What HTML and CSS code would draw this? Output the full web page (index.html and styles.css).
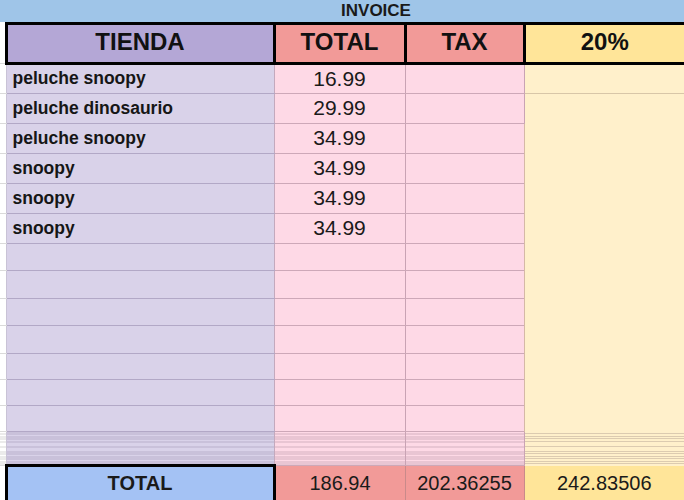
FILE: index.html
```html
<!DOCTYPE html>
<html>
<head>
<meta charset="utf-8">
<link rel="stylesheet" href="styles.css">
</head>
<body>
<div class="sheet">
  <div class="title">INVOICE</div>
  <table class="grid">
    <colgroup>
      <col class="c-gut"><col class="c-name"><col class="c-total"><col class="c-tax"><col class="c-pct">
    </colgroup>
    <tr class="r-head">
      <td class="gut"></td>
      <th class="h-name">TIENDA</th>
      <th class="h-red">TOTAL</th>
      <th class="h-red">TAX</th>
      <th class="h-yel">20%</th>
    </tr>
    <tr class="r-item">
      <td class="gut"></td><td class="name">peluche snoopy</td><td class="pink num">16.99</td><td class="pink"></td><td class="yel first"></td>
    </tr>
    <tr class="r-item">
      <td class="gut"></td><td class="name">peluche dinosaurio</td><td class="pink num">29.99</td><td class="pink"></td><td class="yel merged" rowspan="12"></td>
    </tr>
    <tr class="r-item">
      <td class="gut"></td><td class="name">peluche snoopy</td><td class="pink num">34.99</td><td class="pink"></td>
    </tr>
    <tr class="r-item">
      <td class="gut"></td><td class="name">snoopy</td><td class="pink num">34.99</td><td class="pink"></td>
    </tr>
    <tr class="r-item">
      <td class="gut"></td><td class="name">snoopy</td><td class="pink num">34.99</td><td class="pink"></td>
    </tr>
    <tr class="r-item">
      <td class="gut"></td><td class="name">snoopy</td><td class="pink num">34.99</td><td class="pink"></td>
    </tr>
    <tr class="r-e27"><td class="gut"></td><td class="name"></td><td class="pink"></td><td class="pink"></td></tr>
    <tr class="r-e28"><td class="gut"></td><td class="name"></td><td class="pink"></td><td class="pink"></td></tr>
    <tr class="r-e27"><td class="gut"></td><td class="name"></td><td class="pink"></td><td class="pink"></td></tr>
    <tr class="r-e28"><td class="gut"></td><td class="name"></td><td class="pink"></td><td class="pink"></td></tr>
    <tr class="r-e26"><td class="gut"></td><td class="name"></td><td class="pink"></td><td class="pink"></td></tr>
    <tr class="r-e26"><td class="gut"></td><td class="name"></td><td class="pink"></td><td class="pink"></td></tr>
    <tr class="r-e26"><td class="gut"></td><td class="name"></td><td class="pink"></td><td class="pink"></td></tr>
    <tr class="r-hair">
      <td class="gut hair-gut"></td><td class="name hair-name"></td><td class="pink hair-pink"></td><td class="pink hair-pink"></td><td class="yel hair-yel"></td>
    </tr>
    <tr class="r-total">
      <td class="gut"></td>
      <td class="t-name">TOTAL</td>
      <td class="t-red">186.94</td>
      <td class="t-red">202.36255</td>
      <td class="t-yel">242.83506</td>
    </tr>
  </table>
</div>
</body>
</html>
```

FILE: styles.css
```css
html, body {
  margin: 0;
  padding: 0;
  background: #ffffff;
  overflow: hidden;
}
body {
  width: 684px;
  height: 500px;
  font-family: "Liberation Sans", Arial, sans-serif;
  color: #111111;
}
.sheet {
  width: 684px;
  overflow: hidden;
}
.title {
  box-sizing: border-box;
  width: 684px;
  height: 22px;
  padding-left: 68px;
  background: #9fc5e8;
  text-align: center;
  font-weight: bold;
  font-size: 17px;
  line-height: 22px;
  color: #1a1a1a;
}
.grid {
  border-collapse: collapse;
  table-layout: fixed;
  width: 684px;
}
.c-gut { width: 6px; }
.c-name { width: 268px; }
.c-total { width: 131px; }
.c-tax { width: 119px; }
.c-pct { width: 160px; }

.grid td, .grid th {
  padding: 0;
  overflow: hidden;
  white-space: nowrap;
}
.gut {
  background: #ffffff;
  border-bottom: 1px solid #dadada;
}

/* header */
.r-head { height: 40px; }
.r-head th {
  border: 3px solid #000000;
  font-size: 24px;
  font-weight: bold;
  text-align: center;
  color: #111111;
  padding-bottom: 3px;
}
.r-head th.h-yel { border-right: none; }
.h-name { background: #b4a7d6; }
.h-red { background: #f29a98; }
.h-yel { background: #ffe599; }

/* body rows */
.r-item { height: 30px; }
.r-item td { padding-bottom: 1px; }
.r-e27 { height: 27px; }
.r-e28 { height: 28px; }
.r-e26 { height: 26px; }

.name {
  background: #d9d2e9;
  border-bottom: 1px solid #b2a8c6;
  border-right: 1px solid #c4a9bd;
  border-left: 1px solid #c9c3d6;
  font-weight: bold;
  font-size: 17.5px;
  padding-left: 6px !important;
  color: #161616;
}
.pink {
  background: #fed9e6;
  border-bottom: 1px solid #cda8b8;
  border-right: 1px solid #c9a3b4;
}
.num {
  text-align: center;
  font-size: 21px;
  color: #1a1a1a;
}
.yel {
  background: #fff0cb;
  border-left: 1px solid #d5b9a6;
}
.first {
  border-bottom: 1px solid #d8c6a8;
}

/* hairline band */
.r-hair { height: 34px; }
.hair-gut {
  background: repeating-linear-gradient(to bottom, #ffffff 0, #ffffff 1.5px, #d6d6d6 1.5px, #d6d6d6 2.5px);
}
.hair-name {
  background: repeating-linear-gradient(to bottom, #d9d2e9 0, #d9d2e9 1.5px, #b9afcb 1.5px, #b9afcb 2.5px);
}
.hair-pink {
  background: repeating-linear-gradient(to bottom, #fed9e6 0, #fed9e6 1.5px, #d4b1c0 1.5px, #d4b1c0 2.5px);
}
.hair-yel {
  background: repeating-linear-gradient(to bottom, #fff0cb 0, #fff0cb 1.5px, #dccbb0 1.5px, #dccbb0 2.5px);
}

/* total row */
.r-total { height: 36px; }
.r-total td {
  font-size: 20px;
  text-align: center;
  color: #1a1a1a;
}
.t-name {
  background: #a4c2f4;
  border: 3px solid #000000;
  font-weight: bold;
}
.t-red {
  background: #f29a98;
  border-right: 1px solid #c98a8a;
}
.t-yel {
  background: #ffe599;
}
```
